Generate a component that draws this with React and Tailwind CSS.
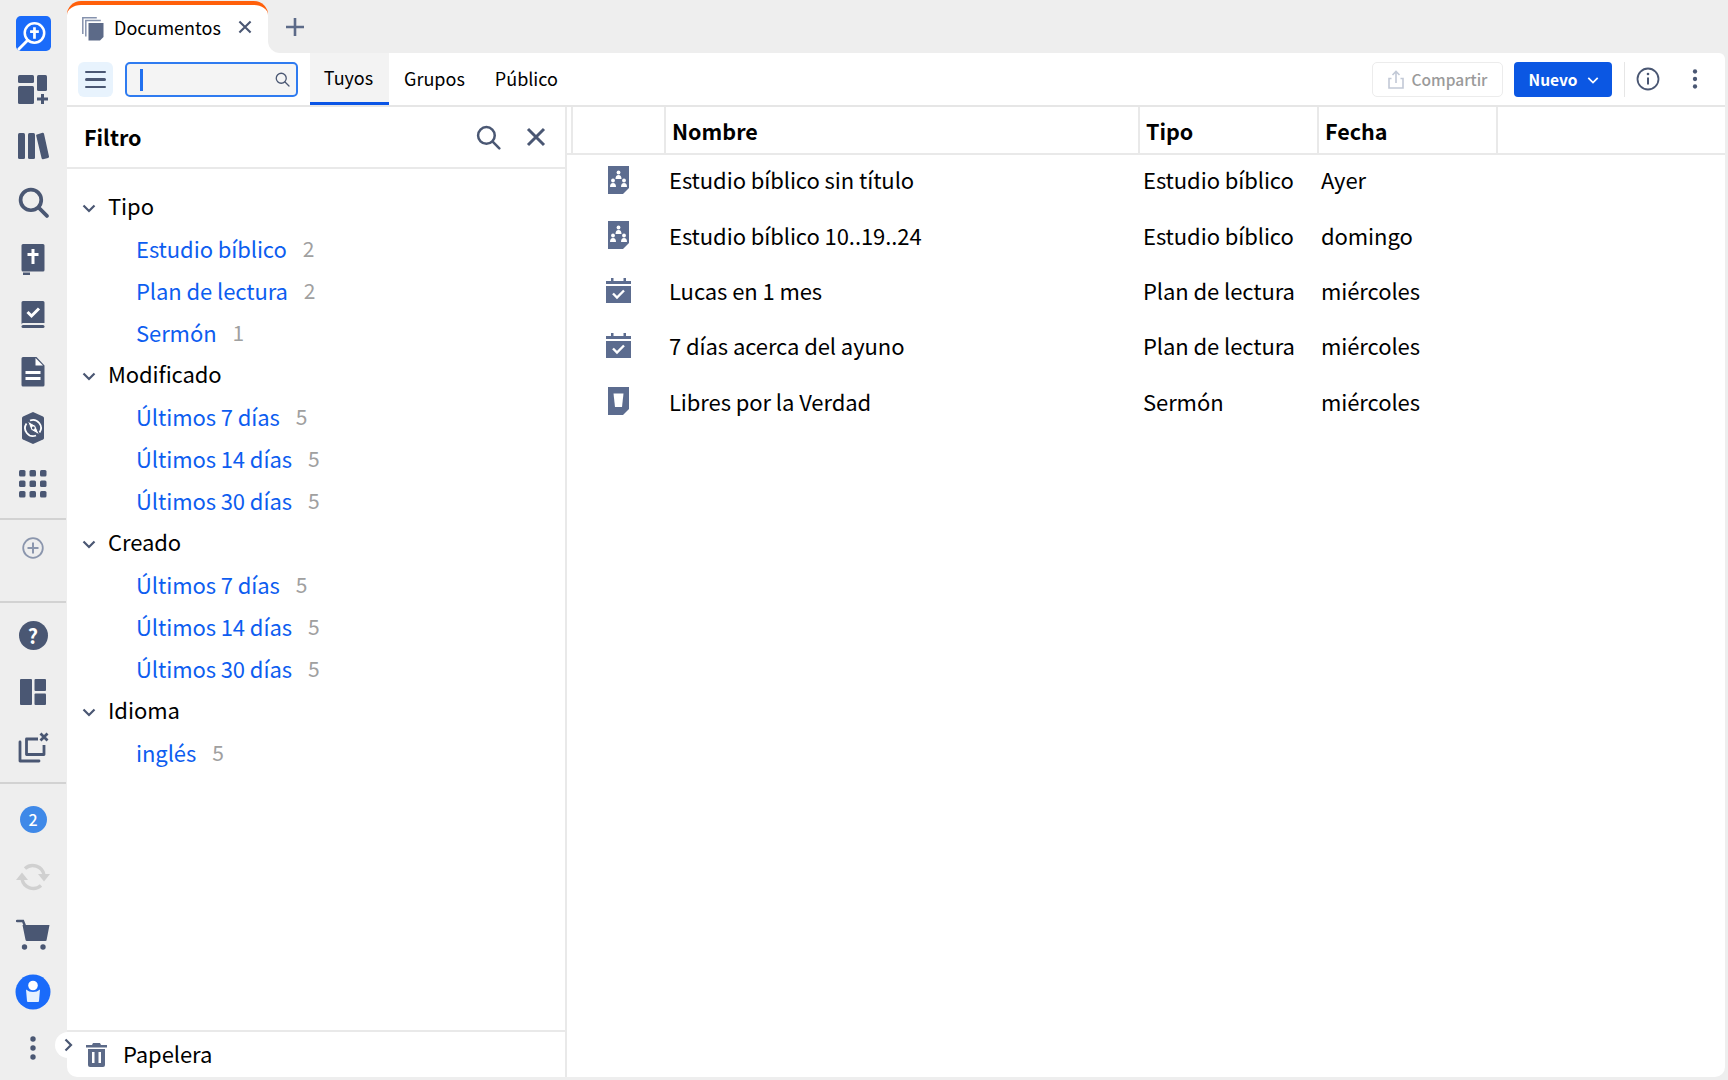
import React from "react";

const F = { fontFamily: '"Noto Sans CJK SC", "Noto Sans", sans-serif' };
const IC = "#4a5773";

function RailItem({ children, h = "h-[56.4px]" }) {
  return <div className={h + " shrink-0 flex items-center justify-center"}>{children}</div>;
}

const Logo = () => (
  <svg width="35" height="35" viewBox="0 0 36 36">
    <rect width="36" height="36" rx="5" fill="#1a6bfa" />
    <circle cx="19" cy="17.500" r="10" fill="none" stroke="#fff" strokeWidth="2.6" />
    <path d="M12 25 L3 34" stroke="#fff" strokeWidth="3" strokeLinecap="round" />
    <path d="M19 11.500v12M14.500 16h9" stroke="#fff" strokeWidth="2.8" />
  </svg>
);
const Dash = () => (
  <svg width="32" height="32" viewBox="0 0 32 32" fill={IC}>
    <rect x="1" y="1" width="16" height="8" rx="1.5" />
    <rect x="20" y="1" width="10" height="16" rx="1.5" />
    <rect x="1" y="12" width="16" height="18" rx="1.5" />
    <path d="M24 20h3v3.5h4v3h-4V30h-3v-3.5h-4v-3h4z" />
  </svg>
);
const Books = () => (
  <svg width="32" height="28" viewBox="0 0 32 28" fill={IC}>
    <rect x="1" y="1" width="7" height="26" rx="1.5" />
    <rect x="11" y="1" width="7" height="26" rx="1.5" />
    <path d="M20 2.5 L25.5 0.8 Q26.6 .6 27 1.8 L32 24.5 Q32.2 25.6 31 26 L26 27.2 Q25 27.4 24.6 26.2 L19.2 3.8 Q19 2.8 20 2.5z" />
  </svg>
);
const SearchI = ({ s = 30, c = IC, w = 3.6 }) => (
  <svg width={s} height={s} viewBox="0 0 30 30" fill="none" stroke={c} strokeWidth={w} strokeLinecap="round">
    <circle cx="12.5" cy="12.5" r="10" />
    <path d="M20 20 L28 28" />
  </svg>
);
const Bible = () => (
  <svg width="24" height="32" viewBox="0 0 24 32" fill={IC} className="mt-[2px]">
    <path d="M2 0h20a1.5 1.5 0 0 1 1.5 1.5V26a1.5 1.5 0 0 1-1.5 1.500H2A1.500 1.500 0 0 1 .5 26V1.500A1.500 1.500 0 0 1 2 0z" />
    <rect x="2" y="28.500" width="7" height="2.500" fill={IC} />
    <path d="M10.500 5h3v4h4v3h-4v8h-3v-8h-4V9h4z" fill="#fff" />
  </svg>
);
const BookCheck = () => (
  <svg width="24" height="32" viewBox="0 0 24 32" className="mt-[2px]">
    <path d="M2 1h20a1.500 1.500 0 0 1 1.500 1.500V23H2a1.500 1.500 0 0 0-1.500 1.500V2.500A1.500 1.500 0 0 1 2 1z" fill={IC} />
    <rect x="0.500" y="25" width="23" height="3" rx="1.500" fill={IC} />
    <path d="M6.500 12l4 4 7.500-7.500" fill="none" stroke="#fff" strokeWidth="3" />
  </svg>
);
const Doc = () => (
  <svg width="24" height="30" viewBox="0 0 24 30" fill={IC}>
    <path d="M2 0h13.500l8 8.500V28a1.500 1.500 0 0 1-1.500 1.500H2A1.500 1.500 0 0 1 .5 28V1.500A1.500 1.500 0 0 1 2 0z" />
    <path d="M14.500 1v7.500h7.500z" fill="#fff" />
    <rect x="4.500" y="14" width="15" height="3" fill="#fff" />
    <rect x="4.500" y="20" width="15" height="3" fill="#fff" />
  </svg>
);
const Compass = () => (
  <svg width="22" height="32" viewBox="0 0 22 32">
    <path d="M11 0 L21 4.500 Q22 5 22 6 V26 Q22 27 21 27.500 L11 32 L1 27.500 Q0 27 0 26 V6 Q0 5 1 4.500z" fill={IC} />
    <path d="M4.500 11.500 A8 8 0 0 0 14 23.500" fill="none" stroke="#fff" strokeWidth="1.800" />
    <path d="M17.500 20.500 A8 8 0 0 0 8 8.500" fill="none" stroke="#fff" strokeWidth="1.800" />
    <path d="M5.500 9 L13.500 13.500 L17.500 23 L9 18z" fill="#fff" stroke={IC} strokeWidth="1" />
    <circle cx="11.300" cy="16" r="1.400" fill={IC} />
  </svg>
);
const Dots9 = () => (
  <svg width="28" height="28" viewBox="0 0 28 28" fill={IC}>
    {[0, 10.500, 21].flatMap((y) =>
      [0, 10.500, 21].map((x) => <rect key={x + "-" + y} x={x} y={y} width="6.500" height="6.500" rx="1.500" />)
    )}
  </svg>
);
const PlusCircle = () => (
  <svg width="22" height="22" viewBox="0 0 22 22" fill="none" stroke="#8b96ad" strokeWidth="1.800">
    <circle cx="11" cy="11" r="9.800" />
    <path d="M11 5.500v11M5.500 11h11" strokeWidth="2" />
  </svg>
);
const Help = () => (
  <div className="w-[29px] h-[29px] rounded-full bg-[#4a5773] flex items-center justify-center text-white text-[20px] font-bold leading-none" style={F}>?</div>
);
const Layout = () => (
  <svg width="26" height="26" viewBox="0 0 26 26" fill={IC}>
    <rect x="0" y="0" width="12" height="26" rx="1" />
    <rect x="14.500" y="0" width="11.500" height="12" rx="1" />
    <rect x="14.500" y="14.500" width="11.500" height="11.500" rx="1" />
  </svg>
);
const DocsX = () => (
  <svg width="32" height="32" viewBox="0 0 32 32" fill="none" stroke={IC} strokeWidth="2.800">
    <path d="M21 7H9.500v15.500H27V13" strokeLinejoin="round" />
    <path d="M3 10v19h19" strokeLinecap="round" strokeLinejoin="round" />
    <path d="M23.500 1.500l7 7M30.500 1.500l-7 7" />
  </svg>
);
const Sync = () => (
  <svg width="36" height="30" viewBox="0 0 36 30" fill="none" stroke="#d0d0d0" strokeWidth="3.400">
    <path d="M10 6.500 A11.500 11.500 0 0 1 29 13" />
    <path d="M7 17 A11.500 11.500 0 0 0 26 23.500" />
    <path d="M23 12h12l-6 7.500z" fill="#d0d0d0" stroke="none" />
    <path d="M1 18h12l-6-7.500z" fill="#d0d0d0" stroke="none" />
  </svg>
);
const Cart = () => (
  <svg width="34" height="31" viewBox="0 0 34 31" fill={IC}>
    <path d="M1 2h6l2 5" fill="none" stroke={IC} strokeWidth="2.400" strokeLinecap="round" />
    <path d="M6.500 6H33.500l-2.800 14.500a1.500 1.500 0 0 1-1.500 1.500H11a1.500 1.500 0 0 1-1.500-1.200z" />
    <circle cx="8.500" cy="28" r="2.700" />
    <circle cx="27" cy="28" r="2.700" />
  </svg>
);
const User = () => (
  <svg width="36" height="36" viewBox="0 0 36 36">
    <circle cx="18" cy="18" r="17.500" fill="#1a6bfa" />
    <circle cx="18" cy="11.500" r="4.800" fill="#fff" />
    <path d="M11 15.500 Q14 18 18 18 Q22 18 25 15.500 L24 27 Q24 28 23 28 H13 Q12 28 12 27z" fill="#e6f1ff" />
  </svg>
);
const VDots = ({ c = IC, r = 2.700, h = 24 }) => (
  <svg width="8" height={h} viewBox="0 0 8 24" fill={c}>
    <circle cx="4" cy="3" r={r} />
    <circle cx="4" cy="12" r={r} />
    <circle cx="4" cy="21" r={r} />
  </svg>
);
const Chev = ({ s = 14, c = IC, w = 2.200 }) => (
  <svg width={s} height={s} viewBox="0 0 14 14" fill="none" stroke={c} strokeWidth={w}>
    <path d="M1.500 4.500 L7 10 L12.500 4.500" />
  </svg>
);
const X = ({ s = 20, w = 3 }) => (
  <svg width={s} height={s} viewBox="0 0 20 20" fill="none" stroke={IC} strokeWidth={w}>
    <path d="M2 2l16 16M18 2L2 18" />
  </svg>
);
const TabDocs = () => (
  <svg width="22" height="24" viewBox="0 0 22 24">
    <path d="M.8 17V.8h14" fill="none" stroke="#8592ad" strokeWidth="1.500" />
    <path d="M3.800 19.500V3.500h15" fill="none" stroke="#8592ad" strokeWidth="1.500" />
    <path d="M6.500 6h15v14l-3.500 3.500H6.500z" fill="#5c6a88" />
  </svg>
);
const Trash = () => (
  <svg width="21" height="24" viewBox="0 0 21 24" fill="#5c6a88">
    <path d="M7 0h7l1 2h6v2.500H0V2h6z" />
    <path d="M2 6h17v16a2 2 0 0 1-2 2H4a2 2 0 0 1-2-2z" />
    <rect x="6" y="9" width="2.500" height="11" fill="#fff" />
    <rect x="12.500" y="9" width="2.500" height="11" fill="#fff" />
  </svg>
);
const DocPeople = () => (
  <svg width="21" height="28" viewBox="0 0 21 28" fill="#5c6c8f">
    <path d="M0 0h21v22l-6 6H0z" />
    <g fill="#fff">
      <circle cx="10.500" cy="6.500" r="1.900" />
      <path d="M7.500 13 Q7.500 9 10.500 9 Q13.500 9 13.500 13z" />
      <circle cx="5" cy="14.500" r="1.900" />
      <path d="M2 21 Q2 17 5 17 Q8 17 8 21z" />
      <circle cx="16" cy="14.500" r="1.900" />
      <path d="M13 21 Q13 17 16 17 Q19 17 19 21z" />
    </g>
  </svg>
);
const CalCheck = () => (
  <svg width="25" height="25" viewBox="0 0 25 25" fill="#5c6c8f">
    <rect x="5" y="0" width="2.500" height="4" />
    <rect x="17.500" y="0" width="2.500" height="4" />
    <rect x="0" y="3" width="25" height="3" />
    <rect x="0" y="8" width="25" height="17" />
    <path d="M7 15.500l4 4 7-7" fill="none" stroke="#fff" strokeWidth="2.400" />
  </svg>
);
const DocCup = () => (
  <svg width="21" height="28" viewBox="0 0 21 28" fill="#5c6c8f">
    <path d="M0 0h21v22l-6 6H0z" />
    <path d="M5.500 6.500h10l-1.500 13.500h-7z" fill="#fff" />
  </svg>
);

const filters = [
  ["Tipo", [["Estudio bíblico", 2], ["Plan de lectura", 2], ["Sermón", 1]]],
  ["Modificado", [["Últimos 7 días", 5], ["Últimos 14 días", 5], ["Últimos 30 días", 5]]],
  ["Creado", [["Últimos 7 días", 5], ["Últimos 14 días", 5], ["Últimos 30 días", 5]]],
  ["Idioma", [["inglés", 5]]],
];
const rows = [
  [<DocPeople />, "Estudio bíblico sin título", "Estudio bíblico", "Ayer"],
  [<DocPeople />, "Estudio bíblico 10..19..24", "Estudio bíblico", "domingo"],
  [<CalCheck />, "Lucas en 1 mes", "Plan de lectura", "miércoles"],
  [<CalCheck />, "7 días acerca del ayuno", "Plan de lectura", "miércoles"],
  [<DocCup />, "Libres por la Verdad", "Sermón", "miércoles"],
];

export default function App() {
  return (
    <div className="w-[1728px] h-[1080px] flex bg-[#eeeeee] text-black overflow-hidden relative" style={F}>
      {/* rail */}
      <div className="w-[66px] shrink-0 flex flex-col items-stretch pt-[5px]">
        <RailItem><Logo /></RailItem>
        <RailItem><Dash /></RailItem>
        <RailItem><Books /></RailItem>
        <RailItem><SearchI s={31} /></RailItem>
        <RailItem><Bible /></RailItem>
        <RailItem><BookCheck /></RailItem>
        <RailItem><Doc /></RailItem>
        <RailItem><Compass /></RailItem>
        <RailItem><Dots9 /></RailItem>
        <div className="mt-[5px] border-t-2 border-[#d2d2d2] h-[83px] flex justify-center pt-[17px]">
          <PlusCircle />
        </div>
        <div className="border-t-2 border-[#d2d2d2] pt-[5px] h-[181px]">
          <RailItem><Help /></RailItem>
          <RailItem><Layout /></RailItem>
          <RailItem><DocsX /></RailItem>
        </div>
        <div className="border-t-2 border-[#d2d2d2] pt-[7px]">
          <RailItem h="h-[57.5px]"><div className="w-[27px] h-[27px] rounded-full bg-[#3f89e8] text-white text-[16px] font-medium flex items-center justify-center leading-none">2</div></RailItem>
          <RailItem h="h-[57.5px]"><Sync /></RailItem>
          <RailItem h="h-[57.5px]"><Cart /></RailItem>
          <RailItem h="h-[57.5px]"><User /></RailItem>
          <RailItem h="h-[54px]"><VDots /></RailItem>
        </div>
      </div>

      {/* main */}
      <div className="flex-1 min-w-0 flex flex-col ml-[1px] mr-[3px] mb-[3px]">
        {/* tab strip */}
        <div className="h-[53px] shrink-0 flex pt-[1px]">
          <div className="w-[201px] bg-white rounded-t-[14px] border-t-[4px] border-[#ff5f0a] flex items-center pl-[15px] relative">
            <TabDocs />
            <span className="ml-[10px] text-[18px] leading-none -mt-[4px]">Documentos</span>
            <span className="ml-[17px] flex -mt-[4px]"><X s={14} w={3} /></span>
          </div>
          <div className="flex-1 bg-white -mt-[1px]">
            <div className="h-full bg-[#eeeeee] rounded-bl-[12px] flex items-center pl-[18px]">
              <svg width="18" height="18" viewBox="0 0 18 18" stroke="#5c6a88" strokeWidth="2.600"><path d="M9 0v18M0 9h18" /></svg>
            </div>
          </div>
        </div>

        {/* white panel */}
        <div className="flex-1 min-h-0 bg-white rounded-b-[10px] rounded-tr-[6px] flex flex-col">
          {/* toolbar */}
          <div className="h-[54px] shrink-0 flex items-stretch border-b-2 border-[#e6e6e6] pr-[26px]">
            <div className="ml-[11px] mt-[9px] w-[35px] h-[35px] rounded-[6px] bg-[#e8f3fd] flex flex-col items-center justify-center gap-[5px]">
              <div className="w-[21px] h-[2.500px] bg-[#4a5773] rounded-full" />
              <div className="w-[21px] h-[2.500px] bg-[#4a5773] rounded-full" />
              <div className="w-[21px] h-[2.500px] bg-[#4a5773] rounded-full" />
            </div>
            <div className="ml-[12px] mt-[9px] w-[173px] h-[35px] rounded-[5px] border-2 border-[#2f7bf0] bg-[#f4f4f4] flex items-center justify-between pl-[13px] pr-[6px]">
              <div className="w-[2.500px] h-[22px] bg-[#2170ef]" />
              <SearchI s={15} w={2.600} />
            </div>
            <div className="ml-[12px] w-[79px] bg-[#f3f3f3] border-b-[3px] border-[#0b55e6] flex items-center justify-center text-[18px] leading-none -mt-[0px]"><span className="-mt-[2px] -ml-[2px]">Tuyos</span></div>
            <div className="ml-[15px] flex items-center text-[18px] leading-none -mt-[2px]">Grupos</div>
            <div className="ml-[30px] flex items-center text-[18px] leading-none -mt-[2px]">Público</div>
            <div className="flex-1" />
            <div className="mt-[9px] w-[131px] h-[35px] border border-[#ececec] rounded-[5px] flex items-center justify-center gap-[8px] text-[#9a9a9a] text-[15.5px] font-medium leading-none">
              <svg width="16" height="19" viewBox="0 0 16 19" fill="none" stroke="#c2c9d6" strokeWidth="1.600">
                <path d="M8 13V2M4.500 5L8 1.500 11.500 5" />
                <path d="M3.500 8.500H1v9.500h14V8.500h-2.500" />
              </svg>
              Compartir
            </div>
            <div className="ml-[11px] mt-[9px] w-[98px] h-[35px] rounded-[4px] bg-[#0b57e3] text-white text-[15.5px] font-bold flex items-center justify-center gap-[10px] leading-none pl-[2px]">
              Nuevo
              <Chev s={12} c="#fff" w={2} />
            </div>
            <div className="ml-[12px] mt-[9px] h-[35px] w-px bg-[#e6e6e6]" />
            <div className="ml-[11px] flex items-center">
              <svg width="24" height="24" viewBox="0 0 24 24" fill="none" stroke="#4a5773" strokeWidth="1.800">
                <circle cx="12" cy="12" r="10.500" />
                <path d="M12 10.500v7" strokeWidth="2" />
                <circle cx="12" cy="7" r="1.300" fill="#4a5773" stroke="none" />
              </svg>
            </div>
            <div className="ml-[31px] flex items-center"><VDots h={20} r={2.600} /></div>
          </div>

          <div className="flex-1 min-h-0 flex">
            {/* filter */}
            <div className="w-[500px] shrink-0 flex flex-col border-r-2 border-[#e9e9e9]">
              <div className="h-[62px] shrink-0 border-b-2 border-[#e9e9e9] flex items-center pl-[17px] pr-[19px]">
                <span className="text-[21.5px] font-bold leading-none">Filtro</span>
                <div className="flex-1" />
                <SearchI s={25} w={3} />
                <span className="ml-[25px] flex"><X s={20} w={3} /></span>
              </div>
              <div className="flex-1 pt-[15px]">
                {filters.map(([h, items]) => (
                  <div key={h}>
                    <div className="h-[42px] flex items-center pl-[15px]">
                      <span className="mt-[5px]"><Chev /></span>
                      <span className="ml-[12px] text-[22px] tracking-[-0.08px] leading-none">{h}</span>
                    </div>
                    {items.map(([t, n]) => (
                      <div key={t} className="h-[42px] flex items-center pl-[69px] text-[22px] tracking-[-0.08px] leading-none relative top-[1px]">
                        <span className="text-[#0d5df0]">{t}</span>
                        <span className="ml-[16px] text-[#a0a0a0] text-[21px]">{n}</span>
                      </div>
                    ))}
                  </div>
                ))}
              </div>
              <div className="h-[47px] shrink-0 border-t-2 border-[#e9e9e9] flex items-center pl-[19px]">
                <Trash />
                <span className="ml-[16px] text-[22px] tracking-[-0.08px] leading-none -mt-[3px]">Papelera</span>
              </div>
            </div>

            {/* table */}
            <div className="flex-1 min-w-0">
              <div className="h-[48px] grid grid-cols-[6px_93px_474px_179px_179px_1fr] border-b-2 border-[#e9e9e9] font-bold text-[21.5px] leading-none">
                <div className="border-r-2 border-[#e9e9e9]" />
                <div className="border-r-2 border-[#e9e9e9]" />
                <div className="border-r-2 border-[#e9e9e9] flex items-center pl-[6px] pt-[1px]">Nombre</div>
                <div className="border-r-2 border-[#e9e9e9] flex items-center pl-[6px] pt-[1px]">Tipo</div>
                <div className="border-r-2 border-[#e9e9e9] flex items-center pl-[6px] pt-[1px]">Fecha</div>
                <div />
              </div>
              <div className="-mt-[3px]">
                {rows.map(([icon, a, b, c]) => (
                  <div key={a} className="h-[55.4px] grid grid-cols-[99px_474px_179px_1fr] items-center text-[22px] tracking-[-0.08px] leading-none">
                    <div className="pl-[3px] flex justify-center">{icon}</div>
                    <div className="pl-[3px] -mt-[1px]">{a}</div>
                    <div className="pl-[3px] -mt-[1px]">{b}</div>
                    <div className="pl-[2px] -mt-[1px]">{c}</div>
                  </div>
                ))}
              </div>
            </div>
          </div>
        </div>
      </div>

      {/* collapse handle */}
      <div className="absolute left-[55px] top-[1032px] w-[26px] h-[26px] rounded-full bg-white flex items-center justify-center">
        <svg width="10" height="14" viewBox="0 0 10 14" fill="none" stroke={IC} strokeWidth="2.200"><path d="M2.500 1.500L8 7l-5.500 5.500" /></svg>
      </div>
    </div>
  );
}
